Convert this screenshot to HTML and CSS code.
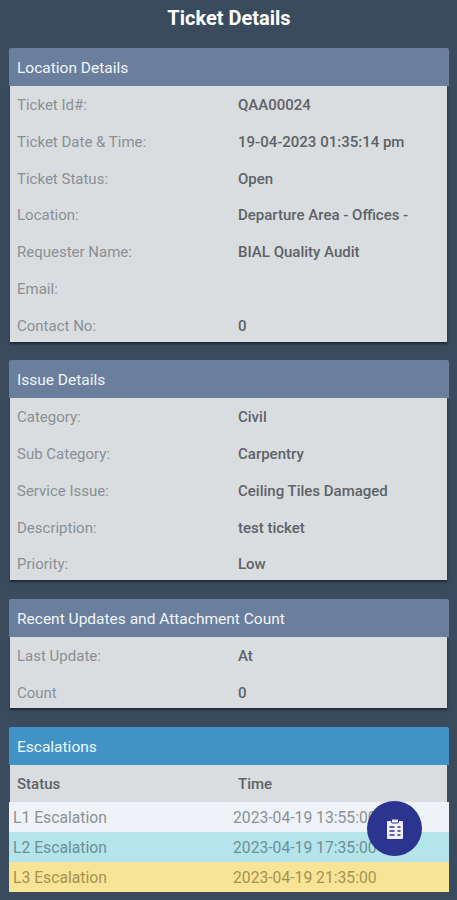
FILE: index.html
```html
<!DOCTYPE html>
<html lang="en">
<head>
  <meta charset="UTF-8">
  <title>Ticket Details</title>
  <link rel="stylesheet" href="styles.css">
</head>
<body>

<h1 class="page-title">Ticket Details</h1>

<div class="card">
  <div class="card-head">Location Details</div>
  <div class="card-body">
    <div class="row"><span class="label">Ticket Id#:</span><span class="value">QAA00024</span></div>
    <div class="row"><span class="label">Ticket Date &amp; Time:</span><span class="value">19-04-2023 01:35:14 pm</span></div>
    <div class="row"><span class="label">Ticket Status:</span><span class="value">Open</span></div>
    <div class="row"><span class="label">Location:</span><span class="value">Departure Area - Offices -</span></div>
    <div class="row"><span class="label">Requester Name:</span><span class="value">BIAL Quality Audit</span></div>
    <div class="row"><span class="label">Email:</span><span class="value"></span></div>
    <div class="row"><span class="label">Contact No:</span><span class="value">0</span></div>
  </div>
</div>

<div class="card">
  <div class="card-head">Issue Details</div>
  <div class="card-body">
    <div class="row"><span class="label">Category:</span><span class="value">Civil</span></div>
    <div class="row"><span class="label">Sub Category:</span><span class="value">Carpentry</span></div>
    <div class="row"><span class="label">Service Issue:</span><span class="value">Ceiling Tiles Damaged</span></div>
    <div class="row"><span class="label">Description:</span><span class="value">test ticket</span></div>
    <div class="row"><span class="label">Priority:</span><span class="value">Low</span></div>
  </div>
</div>

<div class="card">
  <div class="card-head">Recent Updates and Attachment Count</div>
  <div class="card-body">
    <div class="row"><span class="label">Last Update:</span><span class="value">At</span></div>
    <div class="row"><span class="label">Count</span><span class="value">0</span></div>
  </div>
</div>

<div class="card card-last">
  <div class="card-head head-blue">Escalations</div>
  <div class="esc-titles">
    <span class="label-strong">Status</span><span class="value">Time</span>
  </div>
  <div class="esc-row esc-l1"><span class="esc-name">L1 Escalation</span><span>2023-04-19 13:55:00</span></div>
  <div class="esc-row esc-l2"><span class="esc-name">L2 Escalation</span><span>2023-04-19 17:35:00</span></div>
  <div class="esc-row esc-l3"><span class="esc-name">L3 Escalation</span><span>2023-04-19 21:35:00</span></div>
</div>

<button class="fab" aria-label="Checklist">
  <svg width="20" height="22" viewBox="0 0 20 22">
    <path d="M3 3h14a1 1 0 0 1 1 1v16a1 1 0 0 1-1 1H3a1 1 0 0 1-1-1V4a1 1 0 0 1 1-1z" fill="#eef0f6"/>
    <rect x="6.5" y="1" width="7" height="4" rx="1" fill="#eef0f6" stroke="#2b3590" stroke-width="1"/>
    <path d="M4.5 9h5M12.5 9h3M4.5 13h5M12.5 13h3M4.5 17h5M12.5 17h3" stroke="#2b3590" stroke-width="1.5"/>
  </svg>
</button>

</body>
</html>
```

FILE: styles.css
```css
html, body {
  margin: 0;
  padding: 0;
}

body {
  font-family: Roboto, "Liberation Sans", sans-serif;
  background-color: #3a4b5e;
  height: 900px;
  overflow: hidden;
  position: relative;
  padding: 0 8px 0 9px;
  box-sizing: border-box;
}

.page-title {
  margin: 0;
  height: 48px;
  padding-top: 6px;
  box-sizing: border-box;
  font-size: 20px;
  line-height: 25px;
  font-weight: 700;
  color: #fff;
  text-align: center;
}

.card {
  margin-bottom: 18.6px;
}

.card-last {
  margin-bottom: 0;
}

.card-head {
  height: 38px;
  line-height: 40px;
  padding-left: 8px;
  background-color: #6a7f9e;
  color: #f2f5f9;
  font-size: 15.5px;
  border-radius: 2px 2px 0 0;
}

.head-blue {
  background-color: #4193c6;
  color: #eef8fd;
}

.card-body {
  display: flex;
  flex-direction: column;
  gap: 16.8px;
  margin: 0 2px 0 1px;
  padding: 9px 7px 5.8px;
  background-color: #d9dde0;
  box-shadow: 0 2px 2px rgba(15, 25, 40, 0.7);
}

.row {
  display: flex;
  height: 20px;
  align-items: center;
}

.label {
  width: 221px;
  color: #8b8f94;
  font-size: 15px;
}

.value {
  color: #5e6266;
  font-size: 15px;
  font-weight: 500;
}

.esc-titles {
  display: flex;
  align-items: center;
  height: 37px;
  box-sizing: border-box;
  margin: 0 2px 0 1px;
  padding: 2px 7px 0;
  background-color: #d9dde0;
}

.label-strong {
  width: 221px;
  color: #5e6266;
  font-size: 15px;
  font-weight: 500;
}

.esc-row {
  display: flex;
  align-items: center;
  height: 30px;
  box-sizing: border-box;
  padding: 2px 0 0 4px;
  font-size: 15.7px;
  color: #8d9196;
}

.esc-name {
  width: 220px;
}

.esc-l1 {
  background-color: #eff2f6;
}

.esc-l2 {
  background-color: #b4e5ea;
  color: #6d9096;
}

.esc-l3 {
  background-color: #f7e496;
  color: #a4934f;
}

.fab {
  position: absolute;
  left: 367px;
  top: 801px;
  width: 55px;
  height: 55px;
  border: 0;
  border-radius: 50%;
  padding: 0;
  display: flex;
  align-items: center;
  justify-content: center;
  background-color: #2b3590;
}
```
